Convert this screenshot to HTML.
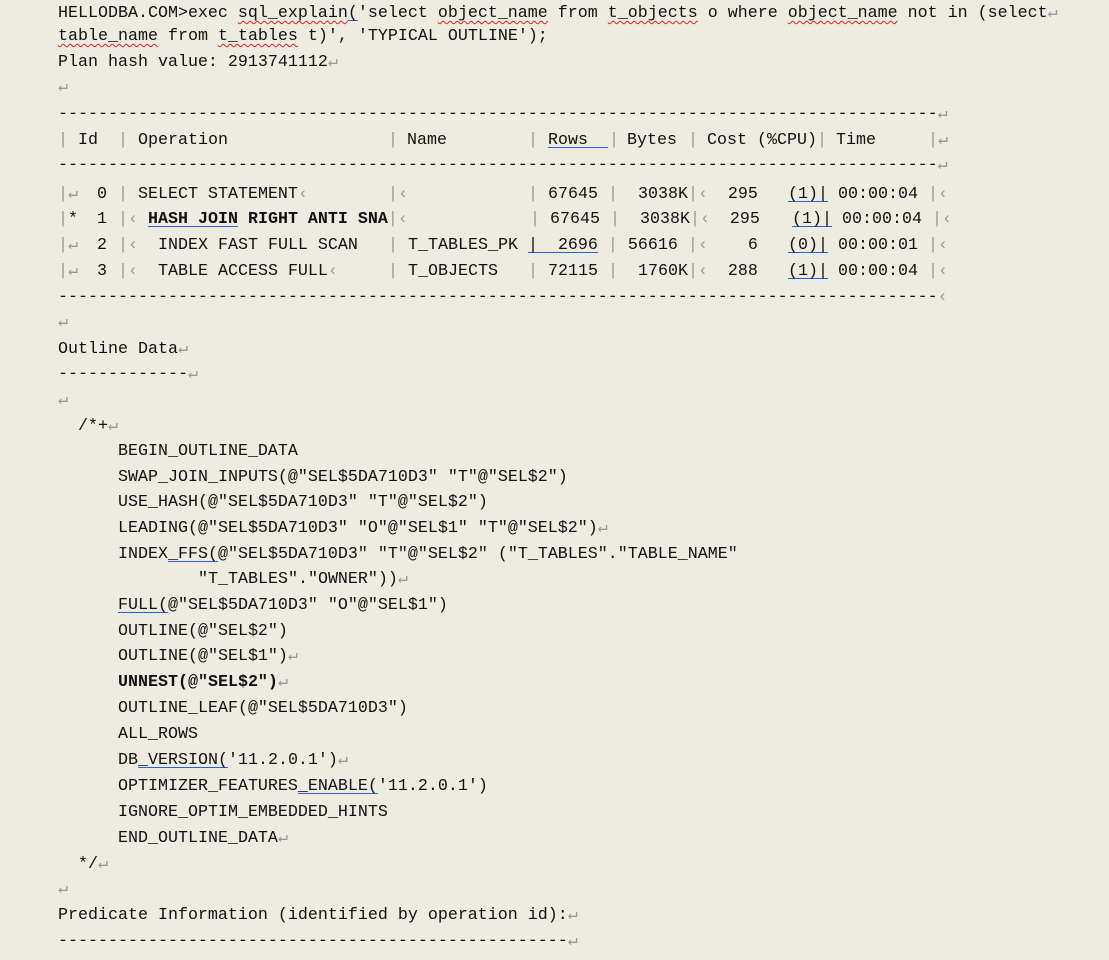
<!DOCTYPE html>
<html><head><meta charset="utf-8"><style>
html,body{margin:0;padding:0;}
body{width:1109px;height:960px;background:#eeebe1;position:relative;overflow:hidden;color:#111;}
.t{position:absolute;white-space:pre;font-family:"Liberation Mono","Noto Sans CJK SC",monospace;font-size:16.67px;line-height:26px;}
.g{color:#999;}
.b{color:#999;}
.w{text-decoration:underline wavy #e02020;text-decoration-thickness:1px;text-underline-offset:3px;}
.u{text-decoration:underline #2a5fd6;text-underline-offset:3px;}
.bd{font-weight:bold;}
</style></head><body>
<div class="t" style="left:58px;top:1px">HELLODBA.COM&gt;exec <span class="w">sql_explain</span><span class="u">(</span>'select <span class="w">object_name</span> from <span class="w">t_objects</span> o where <span class="w">object_name</span> not in (select<span class="g">↵</span></div>
<div class="t" style="left:58px;top:24px"><span class="w">table_name</span> from <span class="w">t_tables</span> t)', 'TYPICAL OUTLINE');</div>
<div class="t" style="left:58px;top:50px">Plan hash value: 2913741112<span class="g">↵</span></div>
<div class="t g" style="left:58px;top:75px">↵</div>
<div class="t" style="left:58px;top:102px">----------------------------------------------------------------------------------------<span class="g">↵</span></div>

<div class="t" style="left:58px;top:128px"><span class="b">|</span> Id  <span class="b">|</span> Operation</div>
<div class="t b" style="left:388px;top:128px">|</div>
<div class="t" style="left:407px;top:128px">Name</div>
<div class="t b" style="left:528px;top:128px">|</div>
<div class="t" style="left:548px;top:128px"><span class="u">Rows  </span></div>
<div class="t b" style="left:609px;top:128px">|</div>
<div class="t" style="left:627px;top:128px">Bytes</div>
<div class="t b" style="left:688px;top:128px">|</div>
<div class="t" style="left:707px;top:128px">Cost (%CPU)</div>
<div class="t b" style="left:817px;top:128px">|</div>
<div class="t" style="left:836px;top:128px">Time</div>
<div class="t b" style="left:928px;top:128px">|↵</div>
<div class="t" style="left:58px;top:153px">----------------------------------------------------------------------------------------<span class="g">↵</span></div>

<!-- row 0 -->
<div class="t" style="left:58px;top:182px"><span class="b">|↵</span></div>
<div class="t" style="left:97px;top:182px">0</div>
<div class="t b" style="left:118px;top:182px">|</div>
<div class="t" style="left:138px;top:182px">SELECT STATEMENT<span class="g">‹</span></div>
<div class="t b" style="left:388px;top:182px">|‹</div>
<div class="t" style="left:528px;top:182px"><span class="b">|</span> 67645 <span class="b">|</span>  3038K<span class="b">|</span><span class="g">‹</span>  295</div>
<div class="t" style="left:788px;top:182px"><span class="u">(1)|</span> 00:00:04 <span class="b">|</span><span class="g">‹</span></div>
<!-- row 1 -->
<div class="t" style="left:58px;top:207px"><span class="b">|</span>*</div>
<div class="t" style="left:97px;top:207px">1</div>
<div class="t" style="left:118px;top:207px"><span class="b">|</span><span class="g">‹</span></div>
<div class="t" style="left:148px;top:207px"><span class="bd"><span class="u">HASH JOIN</span> RIGHT ANTI SNA</span><span class="b">|</span><span class="g">‹</span></div>
<div class="t" style="left:530px;top:207px"><span class="b">|</span> 67645 <span class="b">|</span>  3038K<span class="b">|</span><span class="g">‹</span>  295</div>
<div class="t" style="left:792px;top:207px"><span class="u">(1)|</span> 00:00:04 <span class="b">|</span><span class="g">‹</span></div>
<!-- row 2 -->
<div class="t" style="left:58px;top:233px"><span class="b">|↵</span></div>
<div class="t" style="left:97px;top:233px">2</div>
<div class="t" style="left:118px;top:233px"><span class="b">|</span><span class="g">‹</span></div>
<div class="t" style="left:158px;top:233px">INDEX FAST FULL SCAN</div>
<div class="t" style="left:388px;top:233px"><span class="b">|</span> T_TABLES_PK <span class="u">|  2696</span> <span class="b">|</span> 56616 <span class="b">|</span><span class="g">‹</span>    6</div>
<div class="t" style="left:788px;top:233px"><span class="u">(0)|</span> 00:00:01 <span class="b">|</span><span class="g">‹</span></div>
<!-- row 3 -->
<div class="t" style="left:58px;top:259px"><span class="b">|↵</span></div>
<div class="t" style="left:97px;top:259px">3</div>
<div class="t" style="left:118px;top:259px"><span class="b">|</span><span class="g">‹</span></div>
<div class="t" style="left:158px;top:259px">TABLE ACCESS FULL<span class="g">‹</span></div>
<div class="t" style="left:388px;top:259px"><span class="b">|</span> T_OBJECTS</div>
<div class="t" style="left:528px;top:259px"><span class="b">|</span> 72115 <span class="b">|</span>  1760K<span class="b">|</span><span class="g">‹</span>  288</div>
<div class="t" style="left:788px;top:259px"><span class="u">(1)|</span> 00:00:04 <span class="b">|</span><span class="g">‹</span></div>
<div class="t" style="left:58px;top:285px">----------------------------------------------------------------------------------------<span class="g">‹</span></div>

<div class="t g" style="left:58px;top:310px">↵</div>
<div class="t" style="left:58px;top:337px">Outline Data<span class="g">↵</span></div>
<div class="t" style="left:58px;top:362px">-------------<span class="g">↵</span></div>
<div class="t g" style="left:58px;top:388px">↵</div>
<div class="t" style="left:78px;top:414px">/*+<span class="g">↵</span></div>
<div class="t" style="left:118px;top:439px">BEGIN_OUTLINE_DATA</div>
<div class="t" style="left:118px;top:465px">SWAP_JOIN_INPUTS(@"SEL$5DA710D3" "T"@"SEL$2")</div>
<div class="t" style="left:118px;top:490px">USE_HASH(@"SEL$5DA710D3" "T"@"SEL$2")</div>
<div class="t" style="left:118px;top:516px">LEADING(@"SEL$5DA710D3" "O"@"SEL$1" "T"@"SEL$2")<span class="g">↵</span></div>
<div class="t" style="left:118px;top:542px">INDEX<span class="u">_FFS(</span>@"SEL$5DA710D3" "T"@"SEL$2" ("T_TABLES"."TABLE_NAME"</div>
<div class="t" style="left:198px;top:567px">"T_TABLES"."OWNER"))<span class="g">↵</span></div>
<div class="t" style="left:118px;top:593px"><span class="u">FULL(</span>@"SEL$5DA710D3" "O"@"SEL$1")</div>
<div class="t" style="left:118px;top:619px">OUTLINE(@"SEL$2")</div>
<div class="t" style="left:118px;top:644px">OUTLINE(@"SEL$1")<span class="g">↵</span></div>
<div class="t bd" style="left:118px;top:670px">UNNEST(@"SEL$2")<span class="g" style="font-weight:normal">↵</span></div>
<div class="t" style="left:118px;top:696px">OUTLINE_LEAF(@"SEL$5DA710D3")</div>
<div class="t" style="left:118px;top:722px">ALL_ROWS</div>
<div class="t" style="left:118px;top:748px">DB<span class="u">_VERSION(</span>'11.2.0.1')<span class="g">↵</span></div>
<div class="t" style="left:118px;top:774px">OPTIMIZER_FEATURES<span class="u">_ENABLE(</span>'11.2.0.1')</div>
<div class="t" style="left:118px;top:800px">IGNORE_OPTIM_EMBEDDED_HINTS</div>
<div class="t" style="left:118px;top:826px">END_OUTLINE_DATA<span class="g">↵</span></div>
<div class="t" style="left:78px;top:852px">*/<span class="g">↵</span></div>
<div class="t g" style="left:58px;top:877px">↵</div>
<div class="t" style="left:58px;top:903px">Predicate Information (identified by operation id):<span class="g">↵</span></div>
<div class="t" style="left:58px;top:929px">---------------------------------------------------<span class="g">↵</span></div>
</body></html>
